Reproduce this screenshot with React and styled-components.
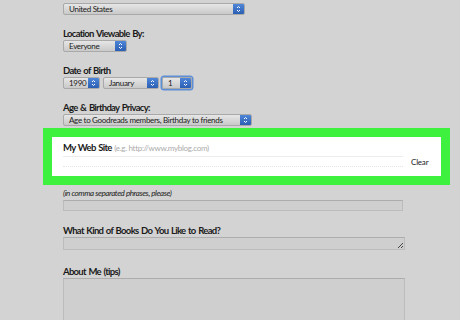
import React from 'react';
import styled, { createGlobalStyle } from 'styled-components';

const Global = createGlobalStyle`
  html, body { margin: 0; padding: 0; background: #d3d3d3; }
  body { font-family: Lato, "Open Sans", sans-serif; color: #111; }
`;

const Page = styled.div`
  width: 460px;
  height: 320px;
  overflow: hidden;
  padding-left: 63px;
  box-sizing: border-box;
`;

const Label = styled.div`
  font-size: 9.5px;
  line-height: 11px;
  font-weight: 700;
  letter-spacing: -0.7px;
  word-spacing: 1px;
  color: #1a1a1a;
  margin-top: ${p => p.top || 0}px;
  margin-bottom: 1px;
  white-space: nowrap;
`;

const Hint = styled.span`
  font-weight: 400;
  color: #ababab;
  font-size: 8px;
  letter-spacing: -0.3px;
  word-spacing: 0;
`;

const Note = styled.div`
  font-size: 8px;
  font-style: italic;
  letter-spacing: -0.4px;
  color: #222;
  margin-top: 4px;
  line-height: 9px;
`;

const Row = styled.div`
  display: flex;
  gap: 3px;
`;

const SelectBox = styled.div`
  display: flex;
  align-items: stretch;
  height: 12px;
  width: ${p => p.w}px;
  box-sizing: border-box;
  border: 1px solid #a9a9a9;
  border-radius: 2px;
  background: linear-gradient(#e6e6e6, #c9c9c9);
  box-shadow: ${p => (p.focus ? '0 0 0 1.5px #5d8fd8' : 'none')};
  margin-top: ${p => p.top || 0}px;
`;

const SelectText = styled.span`
  flex: 1;
  font-size: 8px;
  line-height: 10px;
  padding-left: 5px;
  letter-spacing: -0.3px;
  color: #1a1a1a;
  white-space: nowrap;
  overflow: hidden;
`;

const Arrow = styled.span`
  width: 11px;
  background: linear-gradient(#4f86d8, #2b5fb3);
  border-radius: 0 1px 1px 0;
  display: flex;
  align-items: center;
  justify-content: center;
`;

const Select = ({ w, text, top, focus }) => (
  <SelectBox w={w} top={top} focus={focus}>
    <SelectText>{text}</SelectText>
    <Arrow>
      <svg width="5" height="8" viewBox="0 0 5 8">
        <path d="M1 3 L2.5 1.5 L4 3 M1 5 L2.5 6.5 L4 5" stroke="#fff" strokeWidth="1" fill="none" />
      </svg>
    </Arrow>
  </SelectBox>
);

const Highlight = styled.div`
  margin-left: -20px;
  margin-top: 2px;
  width: 407px;
  box-sizing: border-box;
  border: 9px solid #3ff13f;
  background: #3ff13f;
`;

const WhitePanel = styled.div`
  background: #fff;
  height: 39px;
  width: 389px;
  box-sizing: border-box;
  padding: 5px 0 0 11px;
`;

const SiteRow = styled.div`
  display: flex;
  align-items: center;
  gap: 8px;
  margin-top: 2px;
`;

const FaintInput = styled.div`
  width: 340px;
  height: 9px;
  border-top: 1px solid #ececec;
  border-bottom: 1px dotted #e4e4e4;
`;

const ClearBtn = styled.span`
  font-size: 8px;
  color: #222;
  letter-spacing: -0.2px;
`;

const Input = styled.div`
  width: ${p => p.w}px;
  height: ${p => p.h}px;
  box-sizing: border-box;
  border: 1px solid #bcbcbc;
  border-top-color: #adadad;
  background: #cfcfcf;
  margin-top: ${p => p.top || 0}px;
  position: relative;
`;

const Grip = styled.svg`
  position: absolute;
  right: 0;
  bottom: 0;
`;

export default function App() {
  return (
    <>
      <Global />
      <Page>
        <Select w={182} text="United States" top={3} />
        <Label top={13}>Location Viewable By:</Label>
        <Select w={64} text="Everyone" />
        <Label top={13}>Date of Birth</Label>
        <Row>
          <Select w={37} text="1990" />
          <Select w={56} text="January" />
          <Select w={30} text="1" focus />
        </Row>
        <Label top={13}>Age &amp; Birthday Privacy:</Label>
        <Select w={189} text="Age to Goodreads members, Birthday to friends" />
        <Highlight>
          <WhitePanel>
            <Label>
              My Web Site <Hint>(e.g. http://www.myblog.com)</Hint>
            </Label>
            <SiteRow>
              <FaintInput />
              <ClearBtn>Clear</ClearBtn>
            </SiteRow>
          </WhitePanel>
        </Highlight>
        <Note>(in comma separated phrases, please)</Note>
        <Input w={340} h={11} top={2} />
        <Label top={14}>What Kind of Books Do You Like to Read?</Label>
        <Input w={342} h={13}>
          <Grip width="8" height="8" viewBox="0 0 8 8">
            <path d="M7 2 L2 7 M7 5 L5 7" stroke="#444" strokeWidth="1" />
          </Grip>
        </Input>
        <Label top={16}>About Me (tips)</Label>
        <Input w={342} h={60} />
      </Page>
    </>
  );
}
